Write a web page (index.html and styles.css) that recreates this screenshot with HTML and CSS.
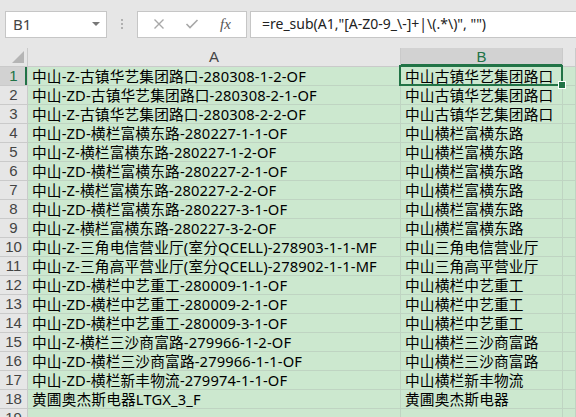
FILE: index.html
```html
<!DOCTYPE html>
<html lang="zh-CN">
<head>
    <meta charset="UTF-8">
    <title>Book1 - Excel</title>
    <link rel="stylesheet" href="styles.css">
</head>
<body>

<div class="formula-bar">
    <div class="name-box">
        <span>B1</span>
        <span class="caret"></span>
    </div>
    <div class="grip"><i></i><i></i><i></i></div>
    <div class="fx-buttons">
        <svg class="btn-icon" width="12" height="12" viewBox="0 0 12 12"><path d="M1.5 1.5 L10.5 10.5 M10.5 1.5 L1.5 10.5" stroke="#a8a8a8" stroke-width="1.4" fill="none"/></svg>
        <svg class="btn-icon" width="14" height="12" viewBox="0 0 14 12"><path d="M1.5 6 L5 9.5 L12.5 2" stroke="#a8a8a8" stroke-width="1.6" fill="none"/></svg>
        <span class="fx">fx</span>
    </div>
    <div class="formula-input">=re_sub(A1,"[A-Z0-9_\-]+|\(.*\)", "")</div>
</div>

<div class="sheet">
    <div class="corner"><svg width="12" height="12" viewBox="0 0 12 12"><polygon points="12,0 12,12 0,12" fill="#b5b5b5"/></svg></div>
    <div class="col-head">A</div>
    <div class="col-head selected">B</div>
    <div class="col-head"></div>

    <div class="row-head selected">1</div>
    <div class="cell">中山-Z-古镇华艺集团路口-280308-1-2-OF</div>
    <div class="cell active">中山古镇华艺集团路口<div class="sel-box"><span class="handle"></span></div></div>
    <div class="cell"></div>

    <div class="row-head">2</div>
    <div class="cell">中山-ZD-古镇华艺集团路口-280308-2-1-OF</div>
    <div class="cell">中山古镇华艺集团路口</div>
    <div class="cell"></div>

    <div class="row-head">3</div>
    <div class="cell">中山-Z-古镇华艺集团路口-280308-2-2-OF</div>
    <div class="cell">中山古镇华艺集团路口</div>
    <div class="cell"></div>

    <div class="row-head">4</div>
    <div class="cell">中山-ZD-横栏富横东路-280227-1-1-OF</div>
    <div class="cell">中山横栏富横东路</div>
    <div class="cell"></div>

    <div class="row-head">5</div>
    <div class="cell">中山-Z-横栏富横东路-280227-1-2-OF</div>
    <div class="cell">中山横栏富横东路</div>
    <div class="cell"></div>

    <div class="row-head">6</div>
    <div class="cell">中山-ZD-横栏富横东路-280227-2-1-OF</div>
    <div class="cell">中山横栏富横东路</div>
    <div class="cell"></div>

    <div class="row-head">7</div>
    <div class="cell">中山-Z-横栏富横东路-280227-2-2-OF</div>
    <div class="cell">中山横栏富横东路</div>
    <div class="cell"></div>

    <div class="row-head">8</div>
    <div class="cell">中山-ZD-横栏富横东路-280227-3-1-OF</div>
    <div class="cell">中山横栏富横东路</div>
    <div class="cell"></div>

    <div class="row-head">9</div>
    <div class="cell">中山-Z-横栏富横东路-280227-3-2-OF</div>
    <div class="cell">中山横栏富横东路</div>
    <div class="cell"></div>

    <div class="row-head">10</div>
    <div class="cell">中山-Z-三角电信营业厅(室分QCELL)-278903-1-1-MF</div>
    <div class="cell">中山三角电信营业厅</div>
    <div class="cell"></div>

    <div class="row-head">11</div>
    <div class="cell">中山-Z-三角高平营业厅(室分QCELL)-278902-1-1-MF</div>
    <div class="cell">中山三角高平营业厅</div>
    <div class="cell"></div>

    <div class="row-head">12</div>
    <div class="cell">中山-ZD-横栏中艺重工-280009-1-1-OF</div>
    <div class="cell">中山横栏中艺重工</div>
    <div class="cell"></div>

    <div class="row-head">13</div>
    <div class="cell">中山-ZD-横栏中艺重工-280009-2-1-OF</div>
    <div class="cell">中山横栏中艺重工</div>
    <div class="cell"></div>

    <div class="row-head">14</div>
    <div class="cell">中山-ZD-横栏中艺重工-280009-3-1-OF</div>
    <div class="cell">中山横栏中艺重工</div>
    <div class="cell"></div>

    <div class="row-head">15</div>
    <div class="cell">中山-Z-横栏三沙商富路-279966-1-2-OF</div>
    <div class="cell">中山横栏三沙商富路</div>
    <div class="cell"></div>

    <div class="row-head">16</div>
    <div class="cell">中山-ZD-横栏三沙商富路-279966-1-1-OF</div>
    <div class="cell">中山横栏三沙商富路</div>
    <div class="cell"></div>

    <div class="row-head">17</div>
    <div class="cell">中山-ZD-横栏新丰物流-279974-1-1-OF</div>
    <div class="cell">中山横栏新丰物流</div>
    <div class="cell"></div>

    <div class="row-head">18</div>
    <div class="cell">黄圃奥杰斯电器LTGX_3_F</div>
    <div class="cell">黄圃奥杰斯电器</div>
    <div class="cell"></div>

    <div class="row-head">19</div>
    <div class="cell"></div>
    <div class="cell"></div>
    <div class="cell"></div>
</div>

</body>
</html>
```

FILE: styles.css
```css
body {
    margin: 0;
    background-color: #e6e6e6;
    font-family: "Noto Sans", "Noto Sans CJK SC", sans-serif;
    overflow: hidden;
}
.formula-bar {
    display: flex;
    align-items: center;
    height: 48px;
    padding-left: 5px;
}
.name-box {
    display: flex;
    align-items: center;
    justify-content: space-between;
    box-sizing: border-box;
    width: 102px;
    height: 27px;
    padding: 0 6px 0 7px;
    background-color: #fff;
    border: 1px solid #c6c6c6;
    font-size: 15px;
    color: #444;
}
.caret {
    width: 0;
    height: 0;
    border-left: 4px solid transparent;
    border-right: 4px solid transparent;
    border-top: 4px solid #777;
}
.grip {
    display: flex;
    flex-direction: column;
    gap: 2px;
    width: 30px;
    align-items: center;
}
.grip i {
    width: 2px;
    height: 2px;
    background-color: #b0b0b0;
}
.fx-buttons {
    display: flex;
    align-items: center;
    box-sizing: border-box;
    width: 110px;
    height: 27px;
    padding-left: 15px;
    background-color: #fff;
    border: 1px solid #c6c6c6;
}
.btn-icon {
    margin-right: 20px;
}
.fx {
    font-family: "Liberation Serif", serif;
    font-style: italic;
    font-size: 15px;
    color: #555;
    margin-left: 1px;
}
.formula-input {
    flex: 1;
    box-sizing: border-box;
    height: 27px;
    margin-left: 3px;
    padding-left: 11px;
    background-color: #fff;
    border: 1px solid #c6c6c6;
    border-right: none;
    font-size: 14px;
    line-height: 24px;
    color: #222;
    white-space: nowrap;
}
.sheet {
    display: grid;
    grid-template-columns: 28px 373px 162px 1fr;
    grid-auto-rows: 19px;
}
.sheet > div {
    box-sizing: border-box;
    border-right: 1px solid #bfd4c2;
    border-bottom: 1px solid #bfd4c2;
}
.sheet > .corner,
.sheet > .col-head,
.sheet > .row-head {
    background-color: #e6e6e6;
    border-color: #cacaca;
    color: #444;
    font-size: 15px;
    line-height: 18px;
}
.corner {
    display: flex;
    align-items: flex-end;
    justify-content: flex-end;
    padding: 0 3px 3px 0;
}
.col-head {
    text-align: center;
    font-family: "Liberation Sans", sans-serif;
}
.row-head {
    text-align: center;
    font-family: "Liberation Sans", sans-serif;
}
.sheet > .selected {
    background-color: #d2d2d2;
    color: #217346;
}
.row-head.selected {
    box-shadow: inset -2px 0 0 #217346;
}
.col-head.selected {
    box-shadow: inset 0 -2px 0 #217346;
}
.cell {
    background-color: #cce8cf;
    font-size: 14.7px;
    letter-spacing: 0.15px;
    line-height: 19px;
    padding-left: 4px;
    white-space: nowrap;
    overflow: hidden;
    color: #000;
}
.sheet > .active {
    position: relative;
    overflow: visible;
}
.sel-box {
    position: absolute;
    left: -2px;
    top: -2px;
    right: -1px;
    bottom: -1px;
    border: 2px solid #217346;
}
.handle {
    position: absolute;
    right: -5px;
    bottom: -5px;
    width: 6px;
    height: 6px;
    background-color: #217346;
    border: 1px solid #fff;
}
```
